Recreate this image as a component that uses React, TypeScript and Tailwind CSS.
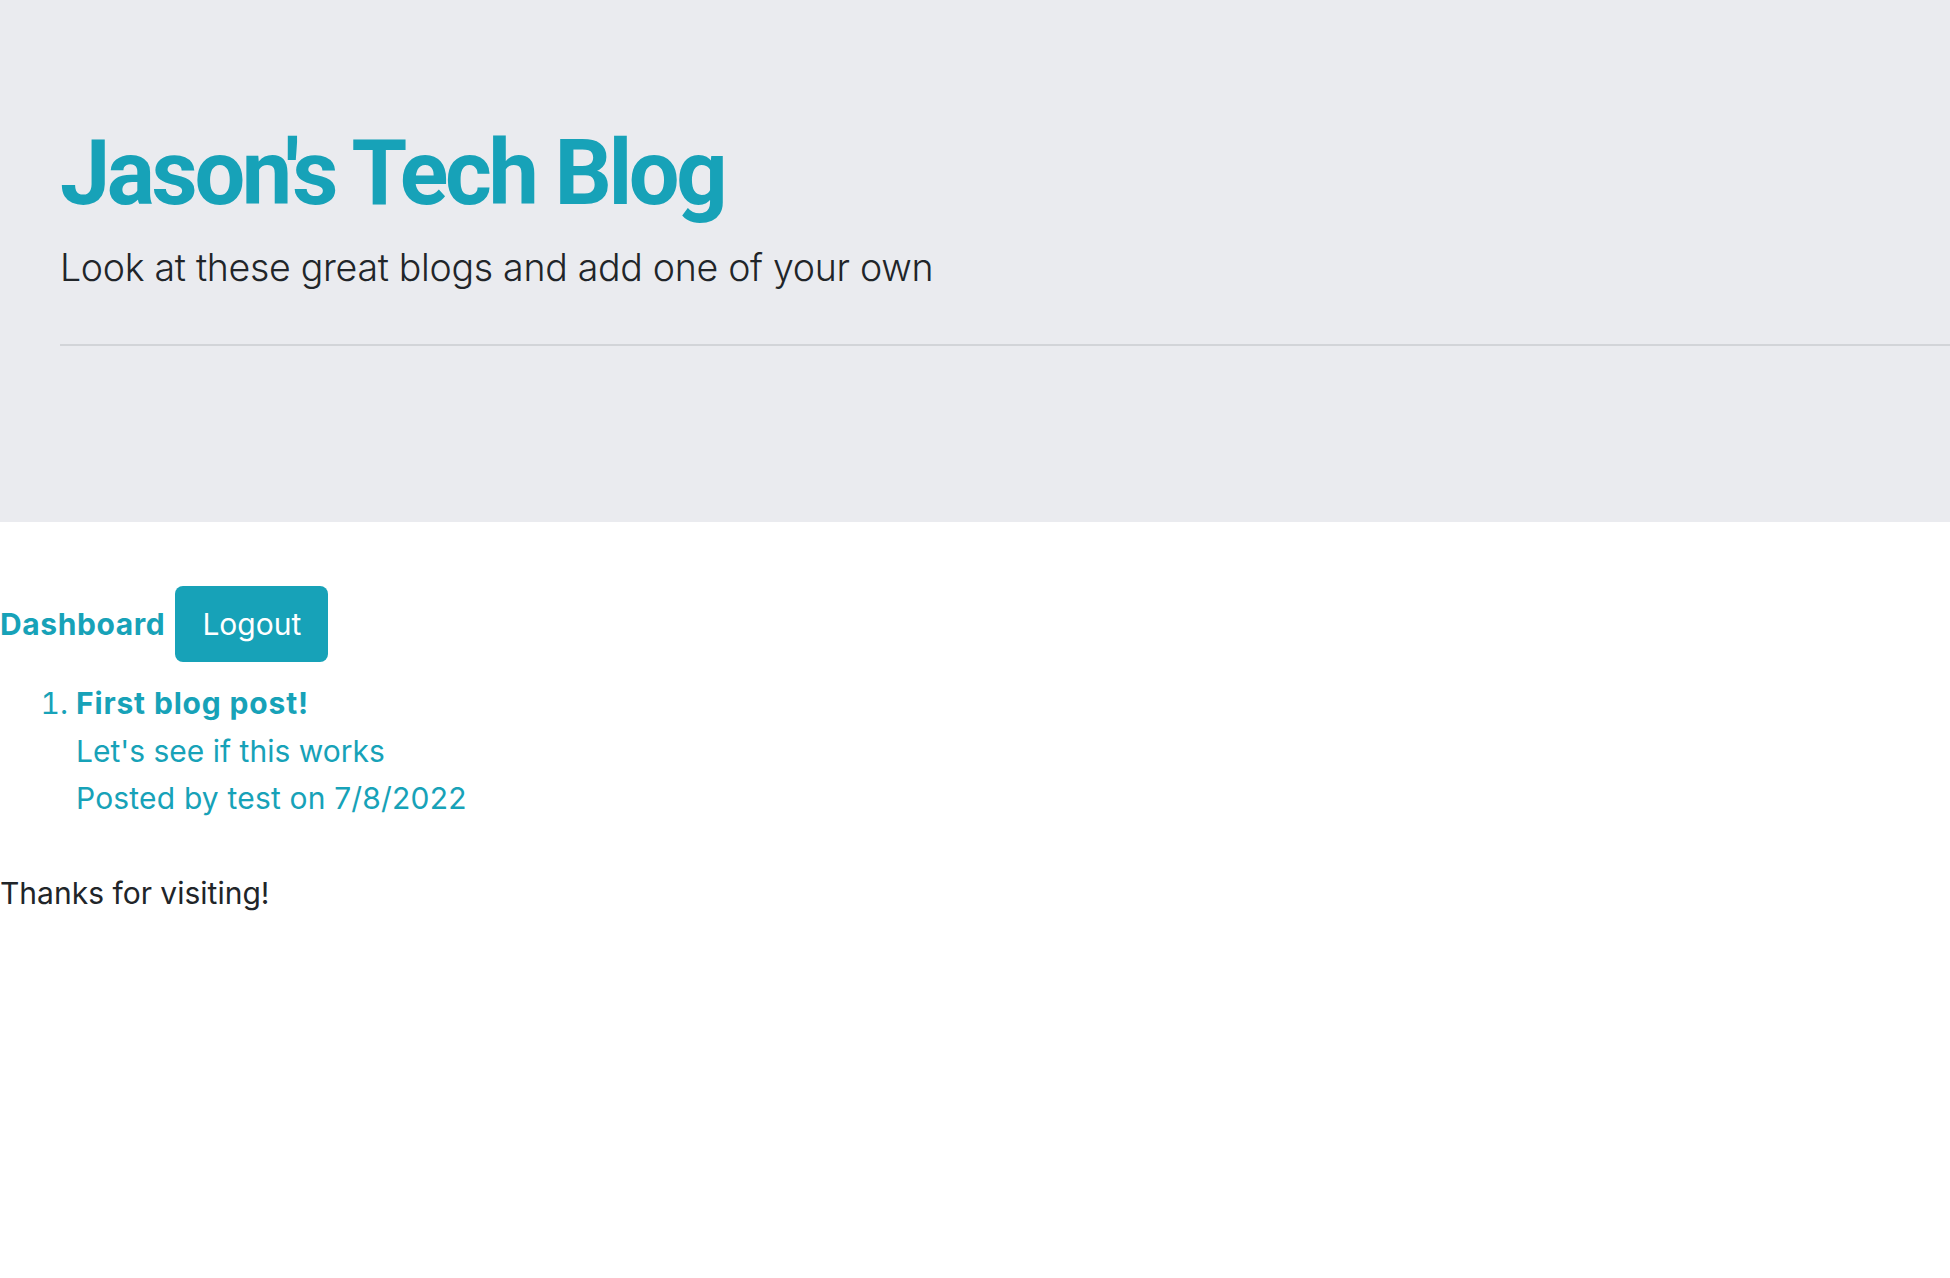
export default function App() {
  return (
    <div className="min-h-screen bg-white font-['Inter','Liberation_Sans',sans-serif] text-[#212529]">
      <header className="h-[522px] overflow-hidden bg-[#eaebef] pl-[60px] pt-[120px]">
        <h1 className="font-['Roboto','Inter',sans-serif] text-[90px] font-bold leading-[108px] tracking-[-0.038em] text-[#17a2b8]">Jason's Tech Blog</h1>
        <p className="mt-[12px] text-[37.5px] font-light leading-[56px] tracking-[-0.008em] text-[#212529]">Look at these great blogs and add one of your own</p>
        <hr className="mt-[48px] border-0 border-t-2 border-[#d2d4d8]" />
      </header>

      <nav className="mt-[64px] flex items-center gap-[10px]">
        <a href="#" className="text-[30px] font-bold leading-[45px] tracking-[0.02em] text-[#17a2b8]">Dashboard</a>
        <button type="button" className="h-[76px] rounded-[8px] bg-[#17a2b8] px-[27px] text-[30px] leading-[45px] text-white">Logout</button>
      </nav>

      <ol className="mt-[18px] list-decimal pl-[76px] text-[30px] leading-[47.5px] text-[#17a2b8]">
        <li>
          <div className="font-bold tracking-[0.028em]">First blog post!</div>
          <div>Let's see if this works</div>
          <div className="tracking-[0.006em]">Posted by test on 7/8/2022</div>
        </li>
      </ol>

      <p className="mt-[47px] text-[30px] leading-[47.5px] text-[#212529]">Thanks for visiting!</p>
    </div>
  );
}
